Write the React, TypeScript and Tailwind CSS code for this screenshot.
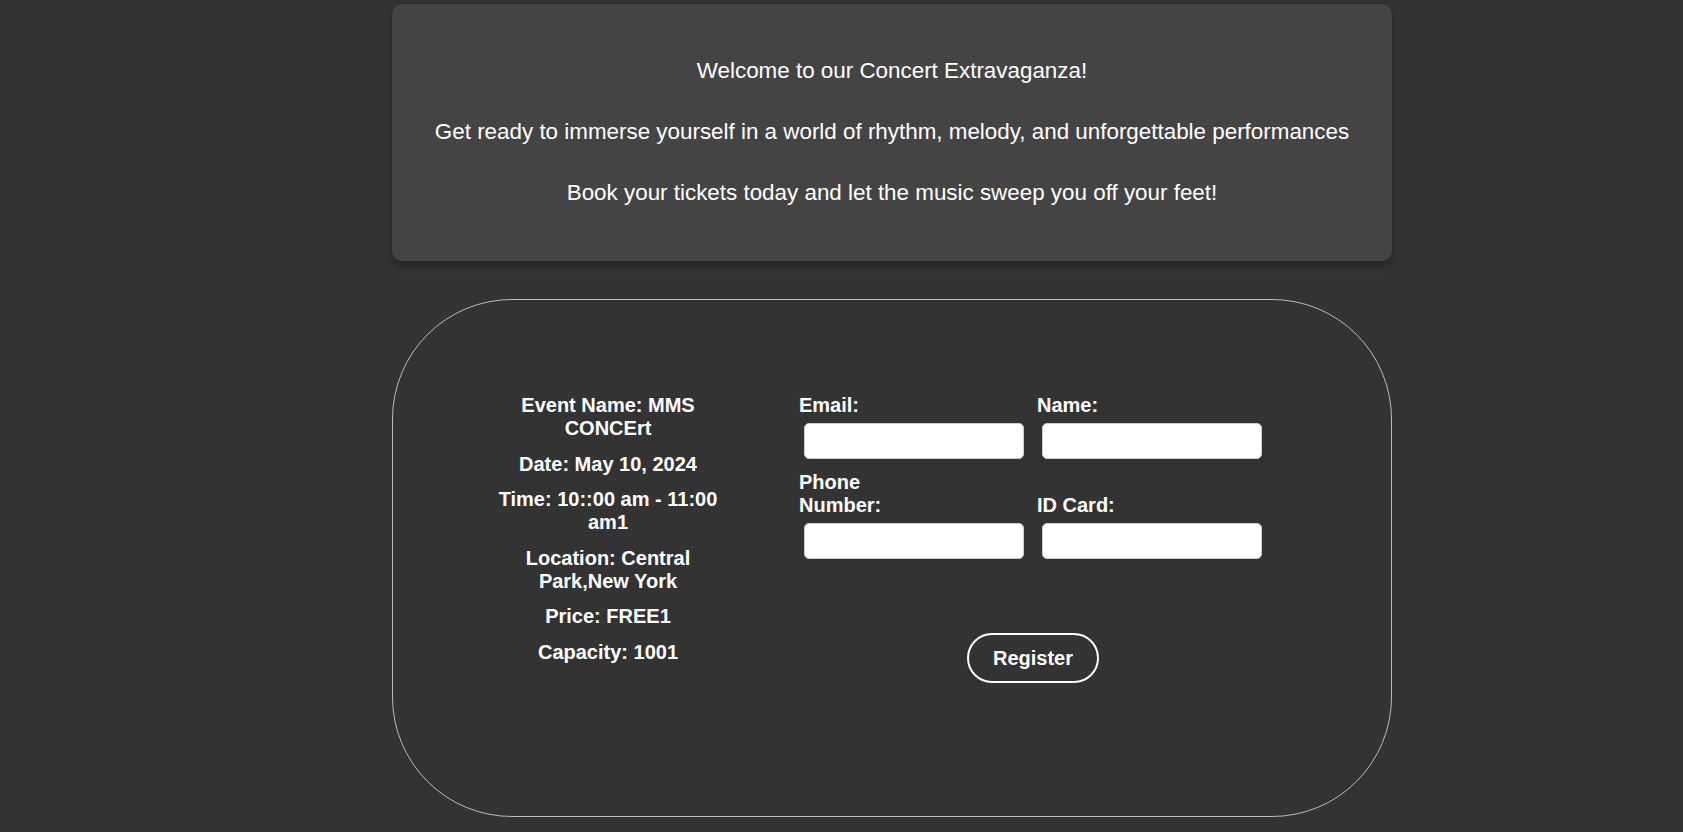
export default function App() {
  const info = [
    "Event Name: MMS CONCErt",
    "Date: May 10, 2024",
    "Time: 10::00 am - 11:00 am1",
    "Location: Central Park,New York",
    "Price: FREE1",
    "Capacity: 1001",
  ];
  return (
    <div className="min-h-[832px] bg-[#333333] pl-[101px] pt-[4px] font-['Liberation_Sans',Arial,sans-serif] text-white">
      <div className="mx-auto w-[1000px]">
        <div className="flex flex-col items-center gap-[35px] rounded-[10px] bg-[#444444] pt-[54px] pb-[55px] text-[22.4px] leading-[26px] shadow-[0_4px_8px_rgba(0,0,0,0.35)]">
          <p>Welcome to our Concert Extravaganza!</p>
          <p>Get ready to immerse yourself in a world of rhythm, melody, and unforgettable performances</p>
          <p>Book your tickets today and let the music sweep you off your feet!</p>
        </div>
        <div className="mt-[38px] flex h-[518px] items-start rounded-[120px] border border-[#bbbbbb] pl-[100px] pt-[94px] text-[20px] font-bold leading-[23px]">
          <div className="flex w-[230px] flex-col gap-[12.5px] text-center">
            {info.map((t) => (
              <p key={t}>{t}</p>
            ))}
          </div>
          <div className="ml-[76px] w-[468px]">
            <div className="grid grid-cols-[230px_230px] gap-x-[8px] gap-y-[12px]">
              {["Email:", "Name:", "Phone Number:", "ID Card:"].map((l) => (
                <div key={l} className="flex flex-col justify-end">
                  <label className="block w-[100px]">{l}</label>
                  <input
                    type="text"
                    className="mt-[6px] ml-[5px] h-[36px] w-[220px] rounded-[5px] border border-[#cccccc] bg-white text-black outline-none"
                  />
                </div>
              ))}
            </div>
            <div className="mt-[74px] flex justify-center">
              <button className="h-[50px] w-[132px] rounded-full border-2 border-white bg-transparent text-[20px] font-bold text-white">
                Register
              </button>
            </div>
          </div>
        </div>
      </div>
    </div>
  );
}
